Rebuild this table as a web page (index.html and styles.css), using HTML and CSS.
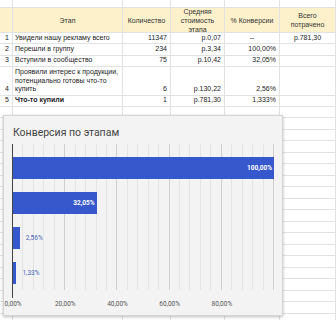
FILE: index.html
```html
<!DOCTYPE html>
<html lang="ru">
<head>
<meta charset="utf-8">
<link rel="stylesheet" href="styles.css">
</head>
<body>
<div class="sheet">
  <div class="grid">
    <div class="c"></div><div class="c"></div><div class="c"></div><div class="c"></div><div class="c"></div><div class="c"></div>

    <div class="c h"></div>
    <div class="c h">Этап</div>
    <div class="c h">Количество</div>
    <div class="c h">Средняя<br>стоимость<br>этапа</div>
    <div class="c h">% Конверсии</div>
    <div class="c h">Всего<br>потрачено</div>

    <div class="c n">1</div><div class="c t">Увидели нашу рекламу всего</div><div class="c n">11347</div><div class="c n">р.0,07</div><div class="c m">--</div><div class="c m">р.781,30</div>
    <div class="c n">2</div><div class="c t">Перешли в группу</div><div class="c n">234</div><div class="c n">р.3,34</div><div class="c n">100,00%</div><div class="c"></div>
    <div class="c n">3</div><div class="c t">Вступили в сообщество</div><div class="c n">75</div><div class="c n">р.10,42</div><div class="c n">32,05%</div><div class="c"></div>
    <div class="c n">4</div><div class="c t">Проявили интерес к продукции, потенциально готовы что-то купить</div><div class="c n">6</div><div class="c n">р.130,22</div><div class="c n">2,56%</div><div class="c"></div>
    <div class="c n">5</div><div class="c t b">Что-то купили</div><div class="c n">1</div><div class="c n">р.781,30</div><div class="c n">1,333%</div><div class="c"></div>

    <div class="c f"></div><div class="c f"></div><div class="c f"></div><div class="c f"></div><div class="c f"></div><div class="c f"></div>
  </div>

  <div class="chart">
    <div class="chart-title">Конверсия по этапам</div>
    <div class="plot">
      <div class="bar" style="width:100%"><span class="in">100,00%</span></div>
      <div class="bar" style="width:32.05%"><span class="in">32,05%</span></div>
      <div class="bar" style="width:2.56%"><span class="out">2,56%</span></div>
      <div class="bar" style="width:1.33%"><span class="out">1,33%</span></div>
    </div>
    <div class="ticks">
      <span>0,00%</span><span>20,00%</span><span>40,00%</span><span>60,00%</span><span>80,00%</span>
    </div>
  </div>
</div>
</body>
</html>
```

FILE: styles.css
```css
* { box-sizing: border-box; }
html, body { margin: 0; padding: 0; background: #fff; }
body { font-family: "Liberation Sans", Arial, sans-serif; font-size: 7px; color: #222; overflow: hidden; }

.sheet { position: relative; width: 336px; height: 320px; overflow: hidden; }

.grid {
  display: grid;
  grid-template-columns: 13px 110px 48px 54px 55px 56px;
  grid-template-rows: 8px 25px 11.3px 11.3px 11.3px 28.7px 11.4px 220px;
}

.c {
  border-right: 1px solid #e2e2e2;
  border-bottom: 1px solid #e2e2e2;
  line-height: 8.5px;
  white-space: nowrap;
  overflow: hidden;
  display: flex;
  align-items: flex-end;
  padding: 0 3px 1px 3px;
}

.h {
  background: #fdf1cb;
  color: #333;
  justify-content: center;
  align-items: center;
  text-align: center;
  padding: 0 2px;
  line-height: 9px;
  overflow: visible;
}

.n { justify-content: flex-end; }
.m { justify-content: center; }
.t { white-space: normal; padding-left: 2px; padding-right: 0; }
.b { font-weight: bold; }

.f {
  background: repeating-linear-gradient(to bottom, transparent 0 10.5px, #e2e2e2 10.5px 11.5px);
  border-bottom: none;
}

.chart {
  position: absolute;
  left: 3px;
  top: 115px;
  width: 280px;
  height: 201px;
  background: #f3f3f3;
  border: 1px solid #d4d4d4;
  box-shadow: 0 1px 3px rgba(0,0,0,0.25);
  font-family: Roboto, "Liberation Sans", sans-serif;
}

.chart-title {
  margin: 10px 0 0 9px;
  font-size: 10.5px;
  line-height: 13px;
  color: #444;
}

.plot {
  margin: 5px 0 0 8px;
  width: 262px;
  height: 154px;
  border-left: 1px solid #444;
  display: flex;
  flex-direction: column;
  gap: 13px;
  padding-top: 13px;
  background:
    repeating-linear-gradient(to right, transparent 0 51.2px, #cfcfcf 51.2px 52.2px),
    repeating-linear-gradient(to right, transparent 0 9.44px, #e3e3e3 9.44px 10.44px);
  background-size: 261px 146px, 261px 146px;
  background-repeat: no-repeat;
}

.bar {
  height: 22px;
  background: #3658cc;
  position: relative;
  flex: none;
}

.bar span {
  position: absolute;
  top: 0;
  line-height: 22px;
  font-size: 6.5px;
  font-weight: bold;
  white-space: nowrap;
}

.bar .in { right: 2px; color: #fff; }
.bar .out { left: 100%; margin-left: 6px; color: #4a63b8; font-weight: normal; }

.ticks {
  display: flex;
  margin: 2px 0 0 -17px;
  font-size: 6.5px;
  color: #555;
}

.ticks span { width: 52.2px; text-align: center; flex: none; }
```
